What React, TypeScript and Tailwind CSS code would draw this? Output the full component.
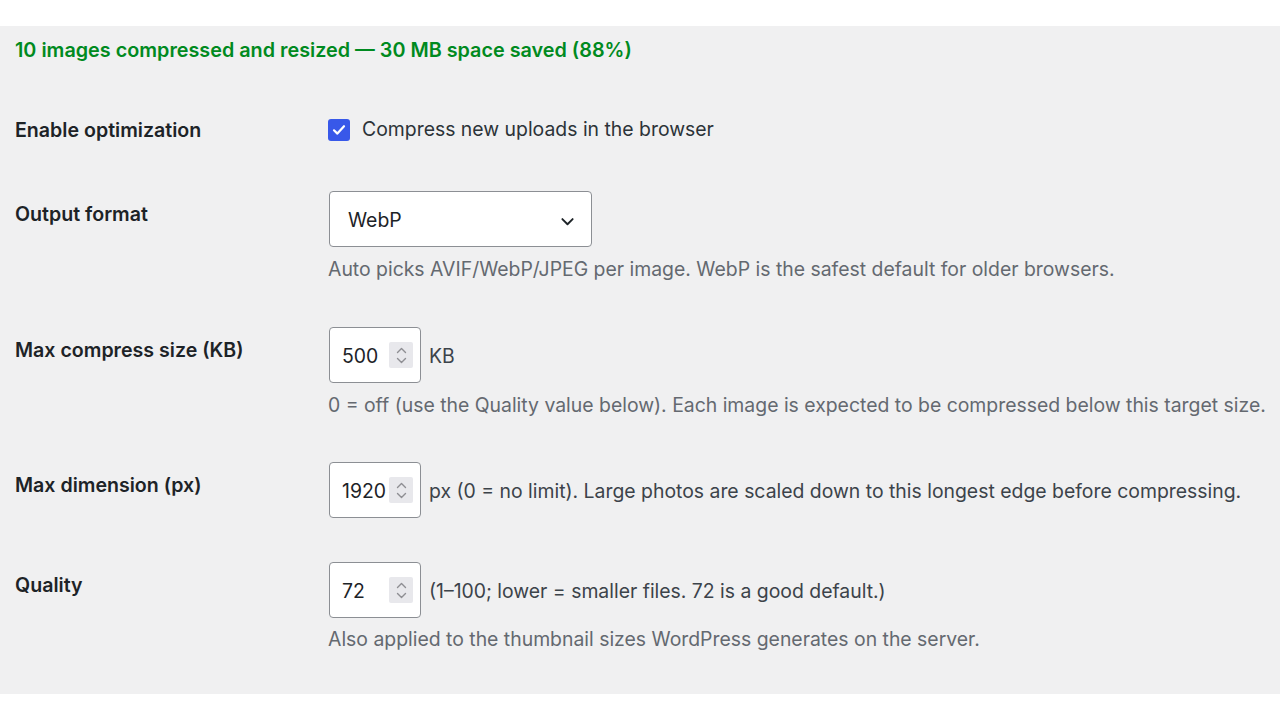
import { useState } from 'react';

const font = { fontFamily: 'Inter, "Noto Sans", sans-serif' };

function Spinner() {
  return (
    <span className="flex h-[26px] w-[24px] flex-col items-center justify-center gap-[3px] rounded-[2px] bg-[#e8e8ec]">
      <svg width="11" height="7" viewBox="0 0 11 7" fill="none">
        <path d="M1.5 5.5L5.5 1.5L9.5 5.5" stroke="#8e8e93" strokeWidth="1.4" strokeLinecap="round" strokeLinejoin="round" />
      </svg>
      <svg width="11" height="7" viewBox="0 0 11 7" fill="none">
        <path d="M1.5 1.5L5.5 5.5L9.5 1.5" stroke="#8e8e93" strokeWidth="1.4" strokeLinecap="round" strokeLinejoin="round" />
      </svg>
    </span>
  );
}

function NumberBox({ value }: { value: string }) {
  return (
    <div className="flex h-[56px] w-[92px] shrink-0 items-center rounded-[4px] border border-[#8c8f94] bg-white pl-[12px] pr-[7px]">
      <span className="flex-1 pt-[3px] text-[19.4px] leading-none text-[#1d2327]">{value}</span>
      <Spinner />
    </div>
  );
}

function Label({ children, className = '' }: { children: React.ReactNode; className?: string }) {
  return (
    <div className={`w-[314px] shrink-0 text-[19.6px] font-semibold leading-[26px] text-[#1d2327] ${className}`}>
      {children}
    </div>
  );
}

function Desc({ children, className = '' }: { children: React.ReactNode; className?: string }) {
  return <p className={`whitespace-nowrap text-[19.4px] leading-[27px] text-[#646970] ${className}`}>{children}</p>;
}

export default function App() {
  const [enabled, setEnabled] = useState(true);

  return (
    <div className="min-h-[720px] overflow-hidden bg-white pt-[26px]" style={font}>
      <div className="bg-[#f0f0f1] px-[15px] pt-[11px] pb-[41px]">
        <p className="text-[19.8px] font-semibold leading-[27px] text-[#008a20]">
          10 images compressed and resized — 30 MB space saved (88%)
        </p>

        {/* Enable optimization */}
        <div className="mt-[52px] flex h-[27px] items-center">
          <Label>Enable optimization</Label>
          <label className="flex cursor-pointer items-center gap-[12px] text-[19.4px] text-[#2c3338]">
            <span
              onClick={() => setEnabled(!enabled)}
              className={`-ml-[1px] flex h-[22px] w-[22px] items-center justify-center rounded-[3px] ${
                enabled ? 'bg-[#3858e9]' : 'border border-[#8c8f94] bg-white'
              }`}
            >
              {enabled && (
                <svg width="14" height="12" viewBox="0 0 14 12" fill="none">
                  <path d="M2 6.3L5.4 9.6L12 2.2" stroke="white" strokeWidth="2.2" strokeLinecap="round" strokeLinejoin="round" />
                </svg>
              )}
            </span>
            Compress new uploads in the browser
          </label>
        </div>

        {/* Output format */}
        <div className="mt-[48px] flex items-start">
          <Label className="pt-[10px]">Output format</Label>
          <div>
            <div className="flex h-[56px] w-[263px] items-center justify-between rounded-[4px] border border-[#8c8f94] bg-white pl-[18px] pr-[14px] pt-[4px]">
              <span className="text-[19.4px] text-[#1d2327]">WebP</span>
              <svg width="19" height="19" viewBox="0 0 24 24" fill="none">
                <path d="M5.5 9L12 15.5L18.5 9" stroke="#1d2327" strokeWidth="2.4" strokeLinecap="round" strokeLinejoin="round" />
              </svg>
            </div>
            <Desc className="-ml-[1px] mt-[9px]">
              Auto picks AVIF/WebP/JPEG per image. WebP is the safest default for older browsers.
            </Desc>
          </div>
        </div>

        {/* Max compress size */}
        <div className="mt-[44px] flex items-start">
          <Label className="pt-[10px]">Max compress size (KB)</Label>
          <div>
            <div className="flex items-center gap-[8px]">
              <NumberBox value="500" />
              <span className="pt-[3px] text-[19.4px] text-[#3c434a]">KB</span>
            </div>
            <Desc className="-ml-[1px] mt-[9px]">
              0 = off (use the Quality value below). Each image is expected to be compressed below this target size.
            </Desc>
          </div>
        </div>

        {/* Max dimension */}
        <div className="mt-[43px] flex items-start">
          <Label className="pt-[10px]">Max dimension (px)</Label>
          <div className="flex items-center gap-[8px]">
            <NumberBox value="1920" />
            <span className="whitespace-nowrap pt-[3px] text-[19.4px] text-[#3c434a]">
              px (0 = no limit). Large photos are scaled down to this longest edge before compressing.
            </span>
          </div>
        </div>

        {/* Quality */}
        <div className="mt-[44px] flex items-start">
          <Label className="pt-[10px]">Quality</Label>
          <div>
            <div className="flex items-center gap-[8px]">
              <NumberBox value="72" />
              <span className="pt-[3px] text-[19.4px] text-[#3c434a]">
                (1–100; lower = smaller files. 72 is a good default.)
              </span>
            </div>
            <Desc className="-ml-[1px] mt-[8px]">
              Also applied to the thumbnail sizes WordPress generates on the server.
            </Desc>
          </div>
        </div>
      </div>
    </div>
  );
}
